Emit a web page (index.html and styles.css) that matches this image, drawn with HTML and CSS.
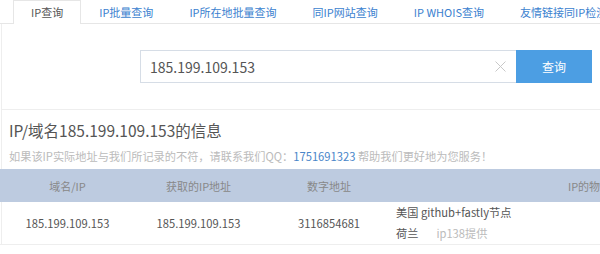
FILE: index.html
```html
<!DOCTYPE html>
<html lang="zh-CN">
<head>
<meta charset="utf-8">
<title>IP查询</title>
<link rel="stylesheet" href="styles.css">
</head>
<body>
<div class="page">
  <ul class="tabs">
    <li class="tab active">IP查询</li>
    <li class="tab">IP批量查询</li>
    <li class="tab">IP所在地批量查询</li>
    <li class="tab">同IP网站查询</li>
    <li class="tab">IP WHOIS查询</li>
    <li class="tab">友情链接同IP检测</li>
  </ul>
  <div class="panel">
    <div class="search">
      <div class="input">
        <span class="value">185.199.109.153</span>
        <svg class="clear" width="11" height="11" viewBox="0 0 11 11"><path d="M0.5 0.5 L10.5 10.5 M10.5 0.5 L0.5 10.5" stroke="#c8c8c8" stroke-width="1" fill="none"/></svg>
      </div>
      <div class="btn">查询</div>
    </div>
    <div class="result">
      <h1 class="title">IP/域名185.199.109.153的信息</h1>
      <p class="note">如果该IP实际地址与我们所记录的不符，请联系我们QQ：<span class="qq">1751691323</span> 帮助我们更好地为您服务！</p>
      <table class="info">
        <colgroup>
          <col class="c1"><col class="c2"><col class="c3"><col class="c4">
        </colgroup>
        <thead>
          <tr><th>域名/IP</th><th>获取的IP地址</th><th>数字地址</th><th>IP的物理位置</th></tr>
        </thead>
        <tbody>
          <tr>
            <td>185.199.109.153</td>
            <td>185.199.109.153</td>
            <td>3116854681</td>
            <td class="loc"><div>美国 github+fastly节点</div><div>荷兰<span class="src">ip138提供</span></div></td>
          </tr>
        </tbody>
      </table>
    </div>
  </div>
</div>
</body>
</html>
```
FILE: styles.css
```css
html, body {
  margin: 0;
  padding: 0;
  background: #fff;
}
body {
  font-family: "Noto Sans CJK SC", "Noto Sans", sans-serif;
  color: #555;
  overflow: hidden;
}
.page {
  width: 600px;
  overflow: hidden;
}
.tabs {
  list-style: none;
  margin: 0;
  padding: 0 0 0 13px;
  display: flex;
  height: 24px;
  border-bottom: 1px solid #e6e6e6;
  box-sizing: border-box;
  white-space: nowrap;
}
.tab {
  flex: none;
  padding: 0 17px;
  font-size: 11px;
  line-height: 23px;
  color: #3b7fcf;
  border: 1px solid transparent;
  border-bottom: none;
}
.tab.active {
  color: #555;
  background: #fff;
  border-color: #e6e6e6;
  height: 24px;
  box-sizing: border-box;
}
.panel {
  margin-left: 1px;
  border-left: 1px solid #eee;
}
.search {
  display: flex;
  padding: 26px 0 0 138px;
}
.input {
  width: 376px;
  height: 33px;
  box-sizing: border-box;
  border: 1px solid #d6dde6;
  border-right: none;
  display: flex;
  align-items: center;
  padding: 0 10px 0 9px;
}
.value {
  flex: 1;
  font-size: 14px;
  color: #555;
}
.btn {
  width: 76px;
  height: 33px;
  background: #4c9ee3;
  color: #fff;
  font-size: 12px;
  line-height: 33px;
  text-align: center;
}
.result {
  margin-top: 26px;
  border-top: 1px solid #eee;
  padding: 8px 0 0 7px;
}
.title {
  margin: 0;
  font-size: 15.5px;
  font-weight: normal;
  line-height: 24px;
  color: #555;
}
.note {
  margin: 5px 0 0;
  font-size: 11.2px;
  line-height: 18px;
  color: #bbb;
  white-space: nowrap;
}
.qq {
  color: #4a86c9;
}
.info {
  margin: 4px 0 0 -9px;
  border-collapse: collapse;
  table-layout: fixed;
  width: 805px;
  font-size: 11px;
}
.c1 { width: 135px; }
.c2 { width: 127px; }
.c3 { width: 134px; }
.c4 { width: 409px; }
.info th {
  background: #bdcbe0;
  color: #888;
  font-weight: normal;
  height: 33px;
  padding: 0;
  text-align: center;
}
.info td {
  height: 42px;
  padding: 0;
  text-align: center;
  color: #555;
  border-bottom: 1px solid #eee;
  font-size: 11.2px;
}
.info td.loc {
  text-align: left;
  line-height: 21px;
}
.src {
  color: #bbb;
  margin-left: 18px;
}
```
